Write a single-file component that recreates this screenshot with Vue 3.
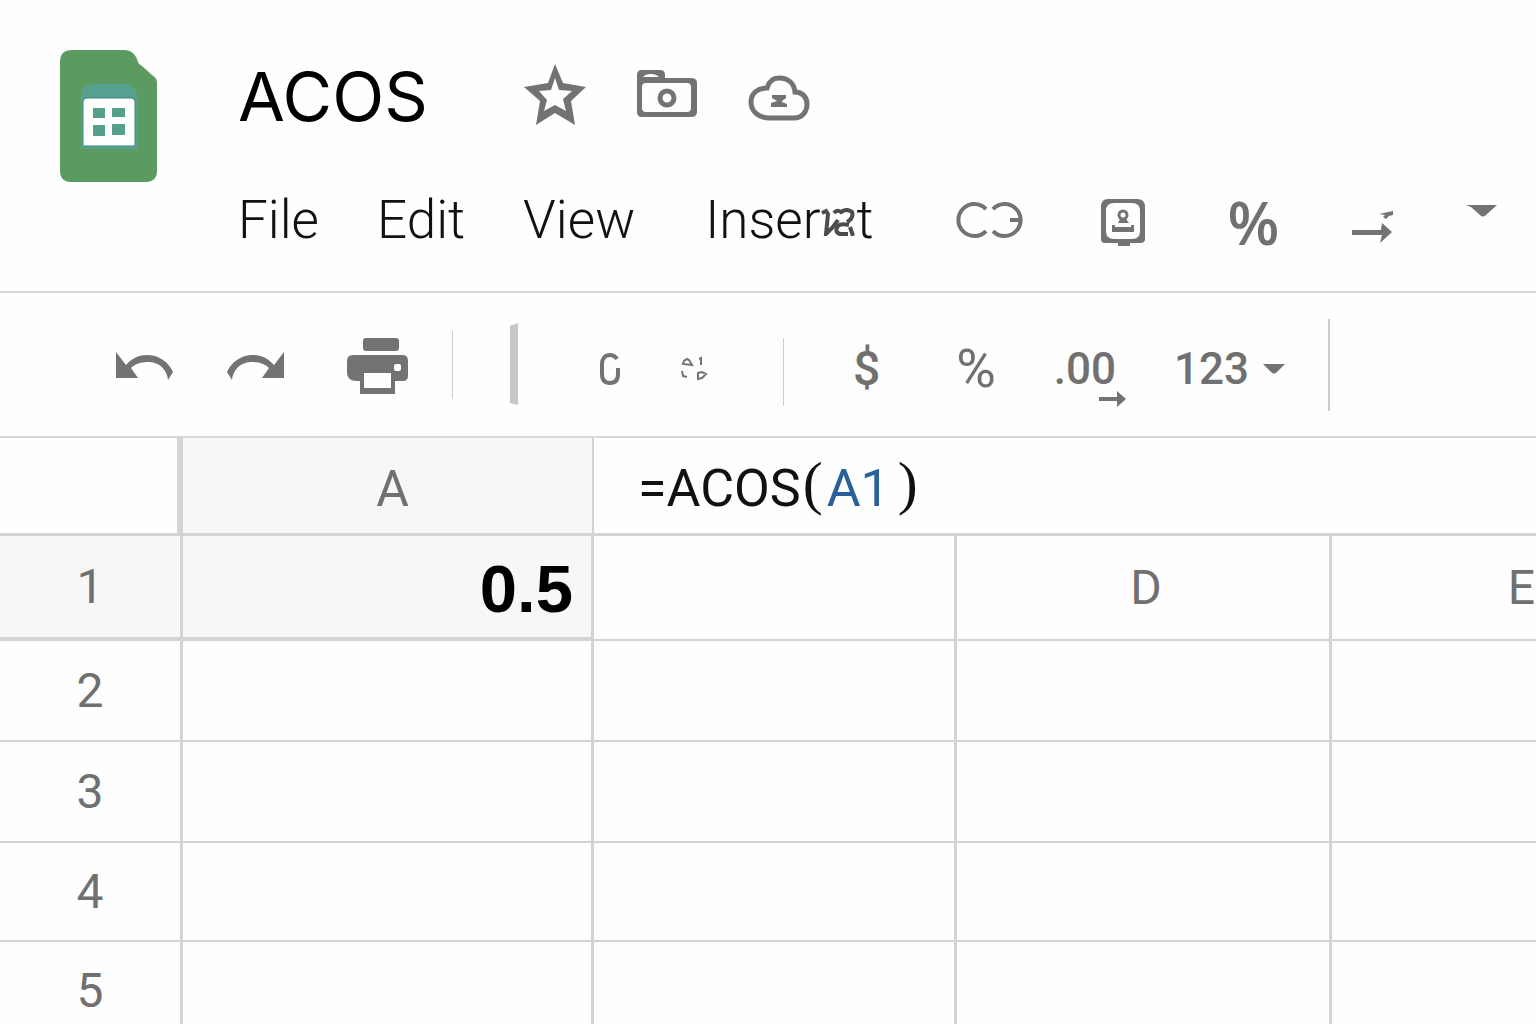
<template>
  <div class="sheet-page">
    <!-- Header -->
    <header class="header">
      <svg class="logo" width="97" height="132" viewBox="0 0 97 132" role="img" aria-label="Sheets">
        <path
          d="M12 0H64C71 0 75 4 77 9C78 13 79 14 82 16L92 25C95 27 97 29 97 33V121C97 128 93 132 86 132H11C4 132 0 128 0 121V12C0 4 4 0 12 0Z"
          fill="#5c9b60"
        />
        <path d="M21 99V46C21 38 26 34 34 34H64C72 34 77 38 77 46V99Z" fill="#55a08f" />
        <path d="M23 96V52Q23 48 27 48H71Q75 48 75 52V96Z" fill="#ffffff" stroke="#3c8782" />
        <path d="M33 58H45V68H33ZM52 58H65V67H52ZM33 75H45V86H33ZM52 74H65V85H52Z" fill="#559f8b" />
      </svg>

      <div class="headings">
        <div class="title-row">
          <h1>ACOS</h1>
          <button aria-label="Star">
            <svg width="62" height="62" viewBox="0 0 62 62">
              <path
                fill-rule="evenodd"
                d="M31 0L39 19L62 23L47 37L51 61L31 49L12 61L16 37L0 23L24 19ZM31 14L27 26L15 27L23 36L20 47L31 41L42 47L39 35L48 27L35 26Z"
              />
            </svg>
          </button>
          <button aria-label="Move to folder">
            <svg width="62" height="62" viewBox="0 0 62 62">
              <path
                fill-rule="evenodd"
                d="M6 6H24Q29 6 29 11V14H55Q61 14 61 19V48Q61 53 55 53H6Q1 53 1 48V11Q1 6 6 6ZM10 19Q6 19 6 23V44Q6 48 10 48H51Q55 48 55 44V23Q55 19 51 19ZM7 13H23Q20 10 15 10Q9 10 7 13Z"
              />
              <circle cx="31" cy="34" r="7" class="line" stroke-width="5" />
            </svg>
          </button>
          <button aria-label="Saved to cloud">
            <svg width="62" height="62" viewBox="0 0 62 62">
              <path
                class="line"
                stroke-width="5"
                d="M46 54H22C10 54 3 47 3 38C3 29 10 24 19 24C21 17 25 14 31 14C40 14 46 19 47 28C54 28 59 33 59 40C59 48 54 54 46 54Z"
              />
              <path d="M24 31H38V34L34 37V38L39 40V43H23V39L29 37L24 34Z" />
            </svg>
          </button>
        </div>

        <nav class="menu-row">
          <button v-for="item in menus" :key="item" class="menu">{{ item }}</button>
          <button class="menu insert">
            <span>Inser</span>
            <svg width="36" height="28" viewBox="0 0 36 28">
              <path
                d="M1 5L5 3L7 6Q6 16 5 26Q12 20 17 12M13 5Q16 1 20 4Q26 0 31 4Q33 10 26 14M28 17Q20 15 17 18Q13 24 19 26H27M29 19L32 28"
              />
            </svg>
            <span>t</span>
          </button>
          <div class="menu-tools">
            <button aria-label="Link">
              <svg width="72" height="44" viewBox="0 0 72 44">
                <path
                  class="line"
                  stroke-width="4"
                  d="M30 9A16 16 0 1 0 30 31M37 9A16 16 0 1 1 37 31M54 20H65"
                />
              </svg>
            </button>
            <button aria-label="Contact">
              <svg width="46" height="48" viewBox="0 0 46 48">
                <path
                  fill-rule="evenodd"
                  d="M8 1H37Q45 1 45 9V41Q45 45 40 45H30V48H18V45H5Q1 45 1 41V9Q1 1 8 1ZM14 5Q6 5 6 13V33Q6 41 14 41H32Q40 41 40 33V13Q40 5 32 5Z"
                />
                <path d="M18 25L20 21H26L29 25ZM12 27H15V29H31V27H34V34H12Z" />
                <circle cx="23" cy="17" r="4" class="line" stroke-width="3" />
              </svg>
            </button>
            <button class="percent-large">%</button>
            <button aria-label="Decimal places">
              <svg width="43" height="44" viewBox="0 0 43 44">
                <path
                  d="M1 30H30L31 23L41 32L29 43L31 35H1ZM28 14L42 11V15L38 16L35 19L32 17L34 15Z"
                />
              </svg>
            </button>
            <button aria-label="More">
              <svg width="32" height="44" viewBox="0 0 32 44">
                <path d="M0 5H31L20 15Q17 18 14 15L5 7Z" />
              </svg>
            </button>
          </div>
        </nav>
      </div>
    </header>

    <!-- Toolbar -->
    <div class="toolbar" role="toolbar">
      <div class="group history">
        <button aria-label="Undo">
          <svg width="59" height="32" viewBox="0 0 59 32"><path :d="undoPath" /></svg>
        </button>
        <button aria-label="Redo">
          <svg width="59" height="32" viewBox="0 0 59 32">
            <path transform="translate(59 0) scale(-1 1)" :d="undoPath" />
          </svg>
        </button>
        <button aria-label="Print">
          <svg width="82" height="58" viewBox="-10 0 82 58">
            <rect x="16" y="1" width="36" height="13" rx="3" />
            <path
              fill-rule="evenodd"
              d="M6 18H56Q61 18 61 24V39Q61 44 56 44H48V57H13V44H9Q0 43 0 36V24Q0 18 6 18ZM17 36V51H44V36ZM49 27Q47 27 47 29V32Q47 34 49 34H52Q54 34 54 32V29Q54 27 52 27Z"
            />
          </svg>
        </button>
      </div>
      <span class="divider"></span>
      <svg class="grip" width="8" height="84" viewBox="0 0 8 84"><path d="M0 3L8 0V82L0 80Z" /></svg>
      <div class="group zoom">
        <button aria-label="Attach">
          <svg width="20" height="32" viewBox="0 0 20 32">
            <path
              class="line"
              stroke-width="4"
              d="M17 6C15 3 13 2 10 2C5 2 2 6 2 11V21C2 27 5 30 10 30C15 30 18 27 18 21V15"
            />
          </svg>
        </button>
        <button aria-label="Refresh">
          <svg width="28" height="26" viewBox="0 0 28 26">
            <path
              class="line"
              stroke-width="2"
              d="M3 8L4 5L7 3L9 4L12 9ZM19 3L21 2V9M2 15L3 20L7 21M18 17L22 16L26 18L22 22L18 23Z"
            />
          </svg>
        </button>
      </div>
      <span class="divider low"></span>
      <div class="group formats">
        <button class="currency">$</button>
        <button class="percent">%</button>
        <button class="decimals">
          .00
          <svg width="27" height="16" viewBox="0 0 27 16">
            <path d="M0 6H18V0L27 8L18 16V10H0Z" />
          </svg>
        </button>
        <button class="number">
          123
          <svg width="22" height="12" viewBox="0 0 22 12">
            <path d="M0 1H22L14 9Q11 12 8 9Z" />
          </svg>
        </button>
      </div>
      <span class="divider tall"></span>
    </div>

    <!-- Grid -->
    <main class="grid">
      <table>
        <colgroup>
          <col class="col-index" />
          <col class="col-a" />
          <col class="col-b" />
          <col class="col-d" />
          <col class="col-e" />
        </colgroup>
        <tbody>
          <tr class="head-row">
            <td class="corner"></td>
            <th class="col-head" scope="col">A</th>
            <td class="formula" colspan="3">
              <div contenteditable="true" role="textbox" aria-label="Formula">=ACOS<span class="paren">(</span><span class="ref">A1</span><span class="paren close">)</span></div>
            </td>
          </tr>
          <tr class="first-row">
            <th scope="row">1</th>
            <td class="value">0.5</td>
            <td></td>
            <th class="letter" scope="col">D</th>
            <th class="letter" scope="col">E</th>
          </tr>
          <tr v-for="row in rows" :key="row" :class="{ short: row > 3 }">
            <th scope="row">{{ row }}</th>
            <td v-for="n in 4" :key="n"></td>
          </tr>
        </tbody>
      </table>
    </main>
  </div>
</template>

<script setup>
const menus = ['File', 'Edit', 'View']
const rows = [2, 3, 4, 5]

// redo uses the same arrow, flipped
const undoPath =
  'M1 2L11 15C17 8 24 5 32 5C43 5 53 11 58 22L53 30C52 20 45 12 33 12C26 12 20 14 16 18L23 28H1Z'
</script>

<style>
body {
  background: #fefefe;
}
</style>

<style scoped>
.sheet-page {
  height: 100vh;
  display: flex;
  flex-direction: column;
  overflow: hidden;
  font-family: Roboto, 'Liberation Sans', sans-serif;
  color: #111111;
}

button {
  border: 0;
  padding: 0;
  margin: 0;
  background: none;
  font-family: inherit;
  color: #707070;
  cursor: pointer;
  flex: none;
}

svg {
  display: block;
  flex: none;
  fill: #737373;
}
.line {
  fill: none;
  stroke: #737373;
}

/* Header */
.header {
  display: flex;
  flex: none;
  box-sizing: border-box;
  height: 293px;
  padding: 50px 0 0 60px;
  border-bottom: 2px solid #d8d8d8;
}
.headings {
  margin-left: 81px;
}
.title-row {
  display: flex;
  align-items: center;
  gap: 50px;
  height: 90px;
}
h1 {
  margin: 0 46px 0 0;
  padding-top: 2px;
  font-family: Inter, sans-serif;
  font-size: 68px;
  line-height: 80px;
  font-weight: 400;
  color: #000000;
}
.menu-row {
  display: flex;
  align-items: center;
  gap: 58px;
  height: 64px;
  margin-top: 48px;
}
.menu {
  font-size: 53px;
  line-height: 64px;
  font-weight: 300;
  color: #111111;
}
.insert {
  display: flex;
  align-items: center;
  margin-left: 12px;
}
.insert svg {
  margin-top: 4px;
  fill: none;
  stroke: #4c4c4c;
  stroke-width: 4px;
}
.menu-tools {
  display: flex;
  align-items: center;
  gap: 72px;
  margin-left: 24px;
  padding-top: 4px;
}
.percent-large {
  margin-left: 10px;
  font-family: 'Open Sans', sans-serif;
  font-size: 60px;
  line-height: 64px;
  font-weight: 600;
}

/* Toolbar */
.toolbar {
  display: flex;
  align-items: center;
  flex: none;
  box-sizing: border-box;
  height: 145px;
  padding-left: 115px;
  border-bottom: 2px solid #d8d8d8;
}
.group {
  display: flex;
  align-items: center;
}
.history {
  gap: 52px;
  padding-top: 2px;
}
.divider {
  flex: none;
  width: 1px;
  height: 68px;
  margin: 0 33px;
  background: #cccccc;
}
.divider.low {
  margin-top: 14px;
}
.divider.tall {
  width: 2px;
  height: 92px;
}
.grip {
  margin: 0 82px 0 24px;
  fill: #c6c6c6;
}
.zoom {
  gap: 60px;
  margin-right: 42px;
  padding-top: 8px;
}
.formats {
  gap: 58px;
  margin: 0 10px 0 36px;
  padding-top: 8px;
}
.currency {
  margin-right: 18px;
  font-size: 48px;
  font-weight: 500;
}
.percent {
  font-size: 54px;
}
.decimals {
  position: relative;
  font-size: 44px;
  font-weight: 500;
}
.decimals svg {
  position: absolute;
  right: -10px;
  bottom: -12px;
}
.number {
  display: flex;
  align-items: center;
  gap: 14px;
  font-size: 44px;
  font-weight: 500;
}

/* Grid */
.grid {
  flex: 1;
  min-height: 0;
  overflow: hidden;
}
table {
  width: 1708px;
  table-layout: fixed;
  border-collapse: separate;
  border-spacing: 0;
}
.col-index {
  width: 183px;
}
.col-a {
  width: 411px;
}
.col-b {
  width: 363px;
}
.col-d {
  width: 375px;
}
.col-e {
  width: 376px;
}
th,
td {
  box-sizing: border-box;
  height: 101px;
  padding: 0;
  border-right: 3px solid #d3d3d3;
  border-bottom: 2px solid #d3d3d3;
  font-size: 48px;
  line-height: 56px;
  font-weight: 400;
  color: #707070;
  text-align: center;
}
.head-row > * {
  height: 98px;
  border-bottom-width: 3px;
}
.first-row > * {
  height: 105px;
}
.first-row th:first-child,
.first-row .value {
  border-bottom-width: 4px;
  background: #f7f7f7;
}
.short > * {
  height: 99px;
}
.corner {
  border-right-width: 6px;
}
.col-head {
  padding: 6px 0 0 10px;
  border-right-width: 2px;
  background: #f7f7f7;
  font-size: 50px;
}
.letter {
  padding-left: 6px;
}
.value {
  padding: 4px 18px 0 0;
  font-family: 'Liberation Sans', sans-serif;
  font-size: 67px;
  font-weight: 700;
  color: #000000;
  text-align: right;
}
.formula {
  padding: 0 0 0 44px;
  text-align: left;
}
.formula div {
  outline: none;
  font-size: 52px;
  line-height: 60px;
  color: #111111;
}
.paren {
  margin-left: 2px;
  font-family: 'Liberation Serif', serif;
  font-size: 60px;
  line-height: 1;
  vertical-align: 3px;
}
.paren.close {
  margin-left: 8px;
}
.ref {
  margin-left: 4px;
  color: #2a6099;
}
</style>
